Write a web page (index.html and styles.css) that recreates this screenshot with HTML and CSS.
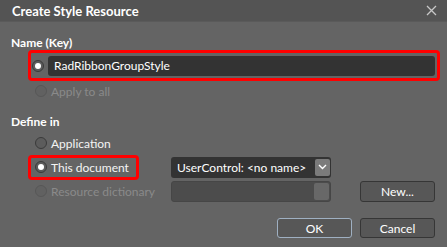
FILE: index.html
```html
<!DOCTYPE html>
<html lang="en">
<head>
    <meta charset="UTF-8">
    <title>Create Style Resource</title>
    <link rel="stylesheet" href="styles.css">
</head>
<body>
    <div class="dialog">
        <div class="titlebar">
            <span class="title">Create Style Resource</span>
            <svg class="close" width="11" height="11" viewBox="0 0 11 11">
                <path d="M1 1 L10 10 M10 1 L1 10" stroke="#c8c8c8" stroke-width="1.3" fill="none"/>
            </svg>
        </div>

        <div class="content">
            <div class="section-label">Name (Key)</div>
            <div class="name-row marked">
                <span class="radio checked"></span>
                <div class="textbox">RadRibbonGroupStyle</div>
            </div>
            <div class="option disabled">
                <span class="radio"></span>
                <span>Apply to all</span>
            </div>

            <div class="section-label define">Define in</div>
            <div class="define-grid">
                <div class="option boxed">
                    <span class="radio"></span>
                    <span>Application</span>
                </div>
                <div></div>
                <div></div>

                <div class="option boxed marked">
                    <span class="radio checked"></span>
                    <span>This document</span>
                </div>
                <div class="combo">
                    <span>UserControl: &lt;no name&gt;</span>
                    <span class="combo-btn">
                        <svg width="9" height="6" viewBox="0 0 9 6">
                            <path d="M1 1 L4.5 4.5 L8 1" stroke="#fff" stroke-width="1.4" fill="none"/>
                        </svg>
                    </span>
                </div>
                <div></div>

                <div class="option boxed disabled">
                    <span class="radio"></span>
                    <span>Resource dictionary</span>
                </div>
                <div class="combo off">
                    <span></span>
                    <span class="combo-btn"></span>
                </div>
                <button class="btn new">New...</button>
            </div>

            <div class="footer">
                <button class="btn default">OK</button>
                <button class="btn">Cancel</button>
            </div>
        </div>
    </div>
</body>
</html>
```

FILE: styles.css
```css
* {
    box-sizing: border-box;
    margin: 0;
    padding: 0;
}

body {
    width: 447px;
    height: 247px;
    overflow: hidden;
    background: #646464;
    color: #f4f4f4;
    font-family: Lato, "Open Sans", sans-serif;
    font-size: 12px;
}

.dialog {
    width: 447px;
    height: 247px;
    background: #646464;
}

.titlebar {
    height: 22px;
    display: flex;
    align-items: center;
    justify-content: space-between;
    padding: 0 10px 0 12px;
    background: #545454;
    border-bottom: 1px solid #5a5a5a;
}

.title {
    font-weight: bold;
    font-size: 13px;
    color: #fff;
}

.content {
    padding: 14px 12px 0 11px;
}

.section-label {
    height: 14px;
    line-height: 14px;
    font-weight: bold;
    color: #fff;
}

.section-label.define {
    margin-top: 14px;
    margin-bottom: 2px;
}

.radio {
    width: 12px;
    height: 12px;
    flex: none;
    border-radius: 50%;
    border: 1px solid #3a3a3a;
    background: #5c5c5c;
    display: flex;
    align-items: center;
    justify-content: center;
}

.radio.checked::after {
    content: "";
    width: 6px;
    height: 6px;
    border-radius: 50%;
    background: #fff;
}

.marked {
    border-color: #f00 !important;
}

.name-row {
    margin-left: 17px;
    width: 412px;
    height: 31px;
    border: 3px solid transparent;
    border-radius: 4px;
    display: flex;
    align-items: center;
    gap: 4px;
    padding: 1px 2px 0 1px;
}

.textbox {
    flex: 1;
    height: 20px;
    line-height: 20px;
    padding-left: 6px;
    background: #333;
    border-radius: 3px;
    color: #fff;
}

.option {
    height: 20px;
    display: flex;
    align-items: center;
    gap: 4px;
    padding-left: 24px;
}

.option.disabled {
    color: #8a8a8a;
}

.option.disabled .radio {
    border-color: #575757;
    background: #616161;
}

.define-grid {
    display: grid;
    grid-template-columns: 143px 160px 1fr;
    grid-auto-rows: 24px;
    margin-left: 17px;
    align-items: center;
}

.option.boxed {
    justify-self: start;
    height: 25px;
    padding: 0 7px 0 4px;
    border: 3px solid transparent;
    border-radius: 4px;
}

.combo {
    height: 21px;
    display: flex;
    align-items: center;
    justify-content: space-between;
    padding: 0 1px 0 6px;
    background: #333;
    border-radius: 3px;
    color: #fff;
}

.combo.off {
    background: #4c4c4c;
    border: 1px solid #464646;
}

.combo-btn {
    width: 15px;
    height: 17px;
    background: #7b7b7b;
    border-radius: 2px;
    display: flex;
    align-items: center;
    justify-content: center;
}

.combo.off .combo-btn {
    background: #686868;
}

.btn {
    width: 75px;
    height: 21px;
    background: #575757;
    border: 1px solid #363636;
    border-radius: 3px;
    color: #fff;
    font-family: inherit;
    font-size: 12px;
}

.btn.new {
    justify-self: end;
}

.btn.default {
    border-color: #9fb0c2;
}

.footer {
    display: flex;
    justify-content: flex-end;
    gap: 8px;
    margin-top: 15px;
}

.footer .btn {
    height: 20px;
}
```
